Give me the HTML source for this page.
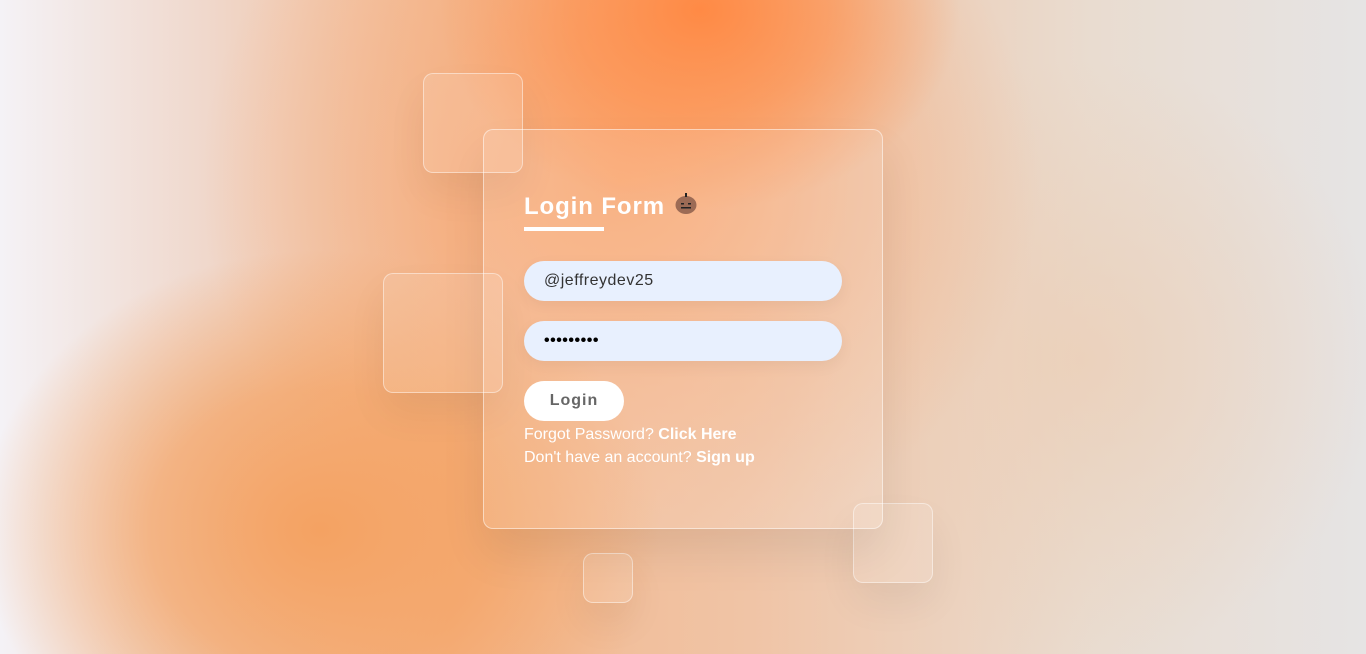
<!DOCTYPE html>
<html><head><meta charset="utf-8"><style>
*{margin:0;padding:0;box-sizing:border-box}
body{width:1366px;height:654px;overflow:hidden;position:relative;font-family:"Liberation Sans",sans-serif;
background:#e6e0da;}
.bg{position:absolute;inset:0;
background:
radial-gradient(ellipse 260px 200px at 700px 10px,#ff8a45 0%,rgba(255,140,70,0.6) 50%,rgba(255,140,70,0) 100%),
radial-gradient(ellipse 340px 280px at 320px 530px,#f4a262 0%,rgba(244,162,98,0.7) 50%,rgba(244,162,98,0) 100%),
radial-gradient(ellipse 420px 380px at 620px 180px,rgba(250,165,110,0.9) 0%,rgba(245,175,130,0.5) 55%,rgba(245,190,160,0) 100%),
radial-gradient(ellipse 300px 300px at 1080px 360px,rgba(236,205,180,0.7) 0%,rgba(236,205,180,0) 100%),
linear-gradient(90deg,#f4f2f6 0%,#f0d8cc 15%,#f3b88e 33%,#f0c4a6 55%,#e9dcd0 80%,#e6e4e4 100%);}
.sq{position:absolute;border:1px solid rgba(255,255,255,0.45);border-radius:10px;background:rgba(255,255,255,0.12);box-shadow:0 20px 40px rgba(0,0,0,0.06)}
.card{position:absolute;left:483px;top:129px;width:400px;height:400px;border:1px solid rgba(255,255,255,0.5);border-radius:10px;background:rgba(255,255,255,0.12);box-shadow:0 25px 45px rgba(0,0,0,0.08)}
h2{position:absolute;left:40px;top:63px;color:#fff;font-size:24px;font-weight:bold;letter-spacing:0.9px}
.ul{position:absolute;left:40px;top:97px;width:80px;height:4px;background:#fff}
.pk{position:absolute;left:191px;top:62px;width:22px;height:22px}
.in{position:absolute;left:40px;width:318px;height:40px;border-radius:20px;background:#e8f0fe;box-shadow:0 5px 15px rgba(0,0,0,0.05);padding-left:20px;line-height:40px;font-size:16px;color:#333;letter-spacing:0.5px}
.btn{position:absolute;left:40px;top:251px;width:100px;height:40px;border-radius:20px;background:#fff;color:#666;font-weight:bold;font-size:16px;text-align:center;line-height:40px;letter-spacing:1px}
.t{position:absolute;left:40px;color:#fff;font-size:16px}
</style></head><body>
<div class="bg"></div>
<div class="sq" style="left:423px;top:73px;width:100px;height:100px"></div>
<div class="sq" style="left:383px;top:273px;width:120px;height:120px"></div>
<div class="sq" style="left:853px;top:503px;width:80px;height:80px"></div>
<div class="sq" style="left:583px;top:553px;width:50px;height:50px"></div>
<div class="card">
<h2>Login Form</h2>
<svg class="pk" viewBox="0 0 22 22"><ellipse cx="11" cy="13" rx="10.5" ry="9" fill="#9c6b55"/><rect x="10" y="1" width="2" height="4" fill="#222"/><rect x="6" y="11" width="3" height="1.5" fill="#222"/><rect x="13" y="11" width="3" height="1.5" fill="#222"/><rect x="6" y="15" width="10" height="1.5" fill="#222"/></svg>
<div class="ul"></div>
<div class="in" style="top:131px">@jeffreydev25</div>
<div class="in" style="top:191px;color:#000;font-weight:bold">•••••••••</div>
<div class="btn">Login</div>
<div class="t" style="top:296px">Forgot Password? <b>Click Here</b></div>
<div class="t" style="top:319px">Don't have an account? <b>Sign up</b></div>
</div>
</body></html>
